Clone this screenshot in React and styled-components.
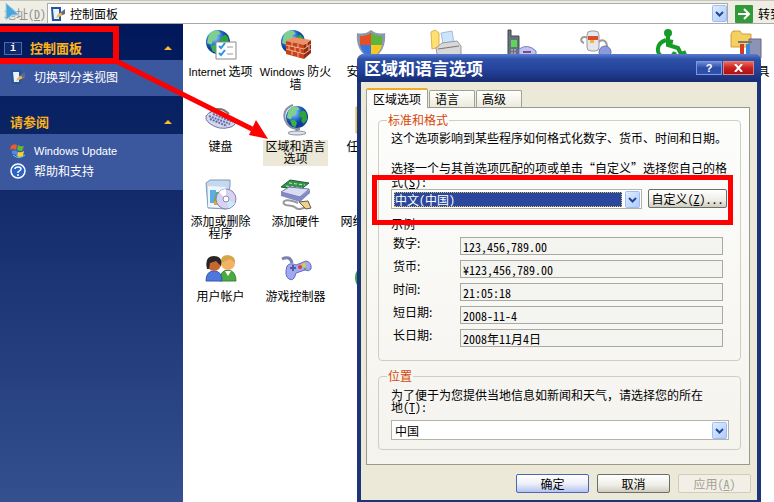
import { useId } from 'react';
import styled, { createGlobalStyle, css } from 'styled-components';

const GlobalStyle = createGlobalStyle`
  * {
    box-sizing: border-box;
  }
  body {
    margin: 0;
    background: #fff;
    color: #000;
    font: 12px/12px 'Noto Sans CJK SC', sans-serif;
    overflow: hidden;
  }
  svg {
    flex: none;
  }
  button, input, select {
    font: inherit;
    color: inherit;
    margin: 0;
  }
`;

/* ---------- icons ---------- */

const Globe = ({ r = 13, cx = 16, cy = 15 }) => {
  const id = useId();
  return (
    <>
      <radialGradient id={id} cx='35%' cy='30%'>
        <stop offset='0' stopColor='#a8d4ff' />
        <stop offset='0.6' stopColor='#2f78dc' />
        <stop offset='1' stopColor='#123c96' />
      </radialGradient>
      <circle cx={cx} cy={cy} r={r} fill={`url(#${id})`} />
      <g transform={`translate(${cx} ${cy}) scale(${r / 13})`} fill='#37b34a'>
        <path d='M-10-7C-8-12-3-13 1-12L3-9-1-7-2-3-6-1-7 3-12 1Z' fill='#7fd08a' />
        <path d='M3-5 8-8 11-5 12 3 8 8 5 5 6 1 2-1Z' fill='#2da33c' />
        <path d='M-8 4-3 3 0 7-2 12-6 10Z' />
      </g>
    </>
  );
};

const art = {
  internet: (
    <>
      <Globe r={12} cx={13} cy={13} />
      <path d='M11 13H31V30H11Z' fill='#fff' stroke='#8a8a8a' />
      <path d='M14 17 16 19 20 14M14 24 16 26 20 21' fill='none' stroke='#2496dc' strokeWidth='2' />
      <path d='M22 18H28M22 25H28' stroke='#999' />
    </>
  ),
  firewall: (
    <>
      <Globe r={12} cx={13} cy={13} />
      <path d='M6 12 24 16V30L6 25Z' fill='#c8431c' />
      <path d='M24 16 31 11V24L24 30Z' fill='#8f2d14' />
      <path d='M6 12 13 8 31 11 24 16Z' fill='#f09066' />
      <path
        d='M6 16 24 20 31 15M6 20 24 25 31 20M12 13V18M18 15V19M9 17V21M15 18V23M20 20V24M12 22V26M18 24V28M27 14V18M29 17V21'
        fill='none'
        stroke='#f3b48f'
      />
    </>
  ),
  shield: (
    <>
      <path d='M16 1Q22 6 30 4Q32 22 16 31Q0 22 2 4Q10 6 16 1Z' fill='#8b98ae' />
      <path d='M16 4Q10 8 5 7V16H16Z' fill='#e84e26' />
      <path d='M16 4Q22 8 27 7V16H16Z' fill='#5db53a' />
      <path d='M5 16Q7 25 16 29V16Z' fill='#3577df' />
      <path d='M27 16Q25 25 16 29V16Z' fill='#f8c820' />
    </>
  ),
  printer: (
    <>
      <path d='M1 3 5 1 9 4V18L2 20Z' fill='#ffe071' stroke='#e1b048' />
      <path d='M11 4 22 2 24 14 13 15Z' fill='#cbe6fc' stroke='#a3bed8' />
      <path d='M6 19 12 14 27 12 31 17V27L8 30Z' fill='#d8d8d8' stroke='#999' />
      <path d='M8 20 29 17' stroke='#777' />
    </>
  ),
  phone: (
    <>
      <path d='M3 1H6V7H14V30H3Z' fill='#67727e' stroke='#404850' />
      <path d='M6 11H12V18H6Z' fill='#5bd852' />
      <path d='M6 21H12M6 24H12' stroke='#ccd' strokeDasharray='2 1' />
      <path d='M14 20Q23 14 31 22V28H14Z' fill='#bdc4f2' stroke='#767fba' />
      <path d='M18 23H26' stroke='#884488' strokeWidth='2' />
    </>
  ),
  power: (
    <>
      <path d='M8 9C1 6-1 12 4 14M17 15C22 8 27 12 27 18' fill='none' stroke='#999' strokeWidth='2' />
      <rect x='7' y='2' width='12' height='20' rx='4' fill='#e4e6f0' stroke='#999' />
      <path d='M8 7H18V11H8Z' fill='#dc4c27' />
      <path d='M10 11H14V14H10Z' fill='#f2b53a' />
      <circle cx='25' cy='23' r='6' fill='#8d99dc' stroke='#6572b4' />
    </>
  ),
  access: (
    <g fill='none' stroke='#169b27' strokeWidth='4'>
      <circle cx='13' cy='4' r='2' fill='#169b27' />
      <path d='M13 7V16L23 19 26 25 31 23M18 13 13 12M11 11C1 14 0 26 9 28 15 30 19 26 20 23' />
    </g>
  ),
  tools: (
    <>
      <path d='M1 5 3 2H10L12 5H21V18H1Z' fill='#f4cf61' stroke='#d29e35' />
      <path d='M19 10H31V29H19Z' fill='#8c93b4' stroke='#636a8b' />
      <path d='M12 15V28' stroke='#d23c26' strokeWidth='4' />
      <path d='M18 15V28' stroke='#3887dc' strokeWidth='4' />
      <path d='M8 13H22' stroke='#777' strokeWidth='2' />
    </>
  ),
  keyboard: (
    <>
      <path d='M4 10Q14 0 24 10' fill='none' stroke='#777' strokeWidth='2' />
      <path d='M1 12Q6 5 14 9L29 15Q33 20 26 23 14 27 4 19Q0 16 1 12Z' fill='#d3d7ee' stroke='#70779f' />
      <path d='M4 12 25 20M5 15 22 22M8 10 28 18' stroke='#636caa' strokeWidth='2' strokeDasharray='2 1' />
    </>
  ),
  region: (
    <>
      <path d='M13 1Q2 5 5 16 9 26 20 25' fill='none' stroke='#8a90a0' strokeWidth='2' />
      <Globe r={11} cx={17} cy={13} />
      <path d='M17 25V28' stroke='#8a90a0' strokeWidth='3' />
      <ellipse cx='17' cy='29' rx='9' ry='2' fill='#dde1ef' stroke='#8a90a0' />
    </>
  ),
  folder: <path d='M1 3H12L15 6H30V29H1Z' fill='#ffe070' stroke='#daac3c' />,
  programs: (
    <>
      <path d='M1 4 5 1H25V7L21 30 3 29Z' fill='#c5d8ed' stroke='#7d9ab8' />
      <path d='M3 7 21 8V29L3 28Z' fill='#edf6ff' />
      <path d='M5 11H11V24H5Z' fill='#5daaf0' />
      <path d='M11 13H15V24H8Z' fill='#5fb84b' />
      <path d='M9 22H15V26H9Z' fill='#f1a131' />
      <circle cx='21' cy='20' r='10' fill='#d7d2f4' stroke='#8884af' />
      <path d='M21 20 14 13A10 10 0 0 1 21 10Z' fill='#fff' />
      <path d='M21 20 30 24A10 10 0 0 1 24 29Z' fill='#c5eef9' />
      <circle cx='21' cy='20' r='3' fill='#fff' stroke='#8c89ad' />
    </>
  ),
  hardware: (
    <>
      <path d='M1 8 10 1 29 4 20 11Z' fill='#35904b' stroke='#205d33' />
      <path d='M6 7 22 9M9 4 25 6' stroke='#c9e9c0' strokeDasharray='3 2' />
      <path d='M1 13 9 8 29 10 20 18Z' fill='#dadcf4' stroke='#7179aa' />
      <path d='M1 13V17L20 23 30 14V10L20 18Z' fill='#8289c4' />
      <path d='M18 24C6 19 2 22 4 25 7 28 12 25 16 29 19 32 23 28 26 29' fill='none' stroke='#999' strokeWidth='2' />
      <path d='M19 23 28 22 31 29 26 30Z' fill='#f0d18a' stroke='#605c58' />
    </>
  ),
  network: <path d='M8 3H27V18H8ZM17 18V24M10 28H30' fill='#72aceb' stroke='#577fae' strokeWidth='2' />,
  users: (
    <>
      <path d='M15 27Q15 16 23 16 31 17 31 27Z' fill='#4bab42' stroke='#338a30' />
      <circle cx='23' cy='9' r='7' fill='#f3b267' />
      <path d='M16 9Q15 1 23 1 31 2 30 9L25 5Z' fill='#d6a64b' />
      <path d='M20 17 23 22 26 17Z' fill='#fff' />
      <path d='M1 27Q1 17 9 17 17 17 17 27Z' fill='#4f78df' stroke='#3457b0' />
      <circle cx='9' cy='10' r='7' fill='#c66732' />
      <path d='M2 15Q-1 2 9 2 18 2 16 12L11 7 5 9 4 15Z' fill='#292426' />
    </>
  ),
  game: (
    <>
      <path d='M2 5Q10 1 12 9' fill='none' stroke='#7d82ad' strokeWidth='3' />
      <path d='M7 12Q10 8 16 11L26 7Q32 8 31 15 29 18 25 16L16 19Q14 28 9 25 4 22 7 12Z' fill='#a0a8ef' stroke='#656db8' />
      <path d='M10 14H16M13 11V17' stroke='#525b9f' strokeWidth='2' />
      <circle cx='20' cy='13' r='2' fill='#e23e2e' />
      <circle cx='24' cy='11' r='2' fill='#edc82b' />
      <circle cx='25' cy='15' r='1' fill='#38a543' />
    </>
  ),
  speech: <circle cx='14' cy='24' r='14' fill='#35a34b' />,
};

const PanelIcon = () => (
  <svg width='16' height='16' viewBox='0 0 16 16'>
    <path d='M1 1 11 1V15L2 15Z' fill='#24559c' />
    <path d='M3 3 9 3V13L4 13Z' fill='#e9f4ff' />
    <path d='M6 12 8 8 14 5 15 8 9 11Z' fill='#f0b85c' />
    <path d='M11 6 15 3V8L12 9Z' fill='#5e6b85' />
  </svg>
);

const UpdateIcon = () => (
  <svg width='16' height='16' viewBox='0 0 16 16'>
    <path d='M1 3Q4 0 7 2L6 7Q3 5 0 7Z' fill='#ec5b29' />
    <path d='M8 2Q11 4 14 3L12 8Q9 8 7 7Z' fill='#58ba3b' />
    <path d='M2 8Q5 6 8 9L7 13Q4 10 2 11Z' fill='#4b8bee' />
    <path d='M8 9Q11 10 14 8L13 13Q10 15 7 13Z' fill='#f6d12b' />
    <path d='M3 12Q9 17 15 12' fill='none' stroke='#69c9ef' />
  </svg>
);

const HelpIcon = () => (
  <svg width='16' height='16' viewBox='0 0 16 16'>
    <circle cx='8' cy='8' r='7' fill='#2c63c7' stroke='#fff' strokeWidth='1.5' />
    <path d='M5 6Q5 4 8 4 11 4 11 6 11 7 8 9V10M8 11V13' fill='none' stroke='#fff' strokeWidth='1.5' />
  </svg>
);

const Chevron = () => {
  const id = useId();
  return (
    <svg width='15' height='17' viewBox='0 0 15 17'>
      <linearGradient id={id} x2='1' y2='1'>
        <stop offset='0' stopColor='#e1ecff' />
        <stop offset='1' stopColor='#aecbfb' />
      </linearGradient>
      <rect x='0.5' y='0.5' width='14' height='16' rx='1' fill={`url(#${id})`} stroke='#9ebcf5' />
      <path d='M4 7 7.5 10.5 11 7' fill='none' stroke='#1f4996' strokeWidth='2' />
    </svg>
  );
};

/* ---------- address bar ---------- */

const AddressBar = styled.header`
  display: flex;
  align-items: center;
  height: 24px;
  padding: 3px 0 0;
  background: #efeee4;
  border-top: 1px solid #c9c7ba;
  border-bottom: 1px solid #aaa;
  overflow: hidden;
`;

const AddressLabel = styled.label`
  width: 47px;
  padding-left: 4px;
  color: #8f8f8c;
  font-feature-settings: 'hwid';
  white-space: nowrap;
`;

const AddressBox = styled.div`
  display: flex;
  flex: 1;
  align-items: center;
  gap: 4px;
  height: 21px;
  padding: 0 0 0 2px;
  background: #fff;
  border: 1px solid #aaa;
`;

const AddressInput = styled.input`
  flex: 1;
  min-width: 0;
  height: 16px;
  padding: 0;
  border: 0;
  outline: 0;
`;

const GoButton = styled.button`
  display: flex;
  flex: none;
  align-items: center;
  gap: 5px;
  width: 46px;
  padding: 0 0 0 7px;
  border: 0;
  background: none;
  white-space: nowrap;
`;

const Pointer = styled.svg`
  position: absolute;
  left: 5px;
  top: 3px;
`;

/* ---------- side bar ---------- */

const Shell = styled.div`
  position: relative;
  display: flex;
  flex-direction: column;
  height: 100vh;
  overflow: hidden;
`;

const Main = styled.div`
  display: flex;
  flex: 1;
`;

const Sidebar = styled.aside`
  flex: none;
  width: 183px;
  background: linear-gradient(#00185a, #0a2363 100px, #122a6a 166px, #34508f);
`;

const PanelHead = styled.h2`
  display: flex;
  align-items: center;
  gap: 8px;
  height: 36px;
  margin: 0;
  padding: 12px 11px 0 ${(p) => (p.$badge ? '4px' : '10px')};
  color: #ffb31a;
  font-size: 13px;
  line-height: 14px;
`;

const Badge = styled.span`
  width: 18px;
  height: 13px;
  border: 1px solid #4e69aa;
  background: #10296c;
  color: #fff;
  font: bold 10px/11px 'Liberation Mono', monospace;
  text-align: center;
`;

const Triangle = styled.i`
  margin-left: auto;
  border: 4px solid transparent;
  border-top: 0;
  border-bottom-color: #ffb92f;
`;

const PanelBody = styled.nav`
  display: flex;
  flex-direction: column;
  gap: 4px;
  padding: 9px 10px 11px;
  margin-bottom: 2px;
  background: #3b589f;
`;

const PanelLink = styled.a`
  display: flex;
  align-items: center;
  gap: 8px;
  height: 16px;
  color: #fff;
  text-decoration: none;
`;

/* ---------- icon area ---------- */

const Latin = styled.span`
  font-family: 'Liberation Sans', sans-serif;
  font-size: 11px;
`;

const IconArea = styled.main`
  flex: 1;
  min-width: 0;
  padding-top: 5px;
  overflow: hidden;
`;

const IconRow = styled.div`
  display: flex;
  height: 75px;
`;

const Item = styled.a`
  display: flex;
  flex: none;
  flex-direction: column;
  align-items: center;
  gap: 4px;
  width: 75px;
  color: #000;
  text-align: center;
  text-decoration: none;
`;

const ItemLabel = styled.span`
  padding: 0 2px 2px;
  white-space: nowrap;
  ${(p) =>
    p.$active &&
    css`
      background: #ebe8d8;
    `}
`;

/* ---------- dialog ---------- */

const Dialog = styled.section`
  position: absolute;
  left: 357px;
  top: 54px;
  width: 404px;
  background: #ece9d8;
  border: solid #1c3579;
  border-width: 0 4px 3px;
  border-radius: 7px 7px 0 0;
`;

const TitleBar = styled.header`
  display: flex;
  align-items: center;
  gap: 1px;
  height: 28px;
  margin: 0 -4px;
  padding: 0 7px;
  border-radius: 7px 7px 0 0;
  background: linear-gradient(#5b7cd4, #2f51a8 5px, #24429a 16px, #162c72);
`;

const Title = styled.h1`
  flex: 1;
  margin: 0;
  color: #fff;
  font-size: 17px;
  line-height: 20px;
`;

const TitleButton = styled.button`
  display: grid;
  place-items: center;
  width: ${(p) => (p.$close ? '31px' : '26px')};
  height: 14px;
  padding: 0;
  border: 1px solid ${(p) => (p.$close ? '#e38377' : '#7d98dc')};
  background: ${(p) =>
    p.$close
      ? 'linear-gradient(#e96a5c, #cc1f1f 50%, #a81414)'
      : 'linear-gradient(#6f8bd6, #2b4ca6 50%, #2f51ad)'};
  color: #fff;
  font: bold 11px/12px 'Liberation Sans', sans-serif;
`;

const TabList = styled.div`
  display: flex;
  align-items: flex-end;
  gap: 1px;
  height: 25px;
  padding: 0 5px;
`;

const Tab = styled.button`
  height: 17px;
  padding: 0 15px 0 5px;
  border: 1px solid #a0a294;
  border-bottom: 0;
  border-radius: 2px 2px 0 0;
  background: linear-gradient(#fff, #eceade);
  ${(p) =>
    p.$active &&
    css`
      z-index: 1;
      height: 20px;
      margin-bottom: -1px;
      padding: 0 6px;
      border-top: 2px solid #f0a92c;
      background: #fcfcfb;
    `}
`;

const TabPage = styled.div`
  display: flex;
  flex-direction: column;
  gap: 9px;
  margin: 0 7px 0 5px;
  padding: 6px 8px 14px 11px;
  border: 1px solid #989a8c;
  background: linear-gradient(#fdfdfc, #f4f3ee);
`;

const Group = styled.fieldset`
  min-width: 0;
  margin: 0;
  padding: ${(p) => (p.$tall ? '6px 13px 13px 12px' : '7px 11px 9px 12px')};
  border: 1px solid #cfcfc0;
  border-radius: 4px;
`;

const Legend = styled.legend`
  margin-left: -4px;
  padding: 0 1px;
  color: #d54708;
`;

const Note = styled.p`
  margin: 0 -2px 17px 0;
`;

const FieldLabel = styled.label`
  display: block;
  line-height: ${(p) => p.$line || 12}px;
`;

const Key = styled.span`
  font-feature-settings: 'hwid';
  white-space: nowrap;
`;

const ComboRow = styled.div`
  display: flex;
  gap: 6px;
  margin-top: ${(p) => p.$gap}px;
`;

const ComboBox = styled.div`
  display: flex;
  flex: 1;
  align-items: center;
  height: 20px;
  padding: 1px;
  border: 1px solid #b4b4a9;
  background: #fff;
`;

const Select = styled.select`
  flex: 1;
  height: 15px;
  padding: 0 2px;
  border: 0;
  outline: 0;
  appearance: none;
  background: #fff;
  font-feature-settings: 'hwid';
  line-height: 13px;
  ${(p) =>
    p.$focused &&
    css`
      margin: 0 3px 0 1px;
      padding: 0;
      background: #2b479d;
      border: 1px dotted #d4c35c;
      color: #fff;
    `}
`;

const SampleTitle = styled.p`
  margin: 9px 0 0;
`;

const Samples = styled.div`
  display: grid;
  grid-template-columns: 67px 1fr;
  row-gap: 5px;
  margin: 7px 4px 0 2px;
`;

const Sample = styled.input`
  width: 100%;
  min-width: 0;
  height: 18px;
  padding: 0 2px;
  border: 1px solid #a9a9a2;
  background: #f4f4f1;
  font-feature-settings: 'hwid';
`;

const Button = styled.button`
  width: ${(p) => (p.$wide ? '79px' : '73px')};
  height: 19px;
  padding: 0;
  border: 1px solid #6e6e68;
  border-radius: 2px;
  background: linear-gradient(#fff, #eeede6 60%, #cfccc0);
  font-feature-settings: 'hwid';
  white-space: nowrap;
  ${(p) =>
    p.$primary &&
    css`
      border-color: #4d67b5;
      background: linear-gradient(#fff, #eef0fa 50%, #b4c4f0);
    `}
  &:disabled {
    border-color: #d0cdbd;
    background: #f2f0e6;
    color: #a3a195;
  }
`;

const Footer = styled.footer`
  display: flex;
  justify-content: flex-end;
  gap: 8px;
  padding: 9px 6px 7px;
`;

/* ---------- red marks ---------- */

const Frame = styled.div`
  position: absolute;
  border: ${(p) => p.$weight}px solid #fe0000;
  left: ${(p) => p.$x}px;
  top: ${(p) => p.$y}px;
  width: ${(p) => p.$w}px;
  height: ${(p) => p.$h}px;
  pointer-events: none;
`;

const Arrow = styled.svg`
  position: absolute;
  left: 110px;
  top: 56px;
  pointer-events: none;
`;

const rows = [
  [
    ['internet', <><Latin>Internet</Latin> 选项</>],
    ['firewall', <><Latin>Windows</Latin> 防火<br />墙</>],
    ['shield', '安全中心'],
    ['printer'],
    ['phone'],
    ['power'],
    ['access'],
    ['tools', '管理工具'],
  ],
  [
    ['keyboard', '键盘'],
    ['region', <>区域和语言<br />选项</>],
    ['folder', '任务计划'],
  ],
  [
    ['programs', <>添加或删除<br />程序</>],
    ['hardware', '添加硬件'],
    ['network', '网络安装向'],
  ],
  [
    ['users', '用户帐户'],
    ['game', '游戏控制器'],
    ['speech'],
  ],
];

const samples = [
  ['number', '数字:', '123,456,789.00'],
  ['money', '货币:', '￥123,456,789.00'],
  ['time', '时间:', '21:05:18'],
  ['shortDate', '短日期:', '2008-11-4'],
  ['longDate', '长日期:', '2008年11月4日'],
];

function SampleRow({ id, label, value }) {
  return (
    <>
      <FieldLabel htmlFor={id}>{label}</FieldLabel>
      <Sample id={id} value={value} readOnly />
    </>
  );
}

function SettingsDialog() {
  return (
    <Dialog role='dialog' aria-labelledby='dialog-title'>
      <TitleBar>
        <Title id='dialog-title'>区域和语言选项</Title>
        <TitleButton>?</TitleButton>
        <TitleButton $close aria-label='关闭'>
          <svg width='9' height='8' viewBox='0 0 9 8'>
            <path d='M1 0 8 8M8 0 1 8' stroke='#fff' strokeWidth='2' />
          </svg>
        </TitleButton>
      </TitleBar>
      <TabList role='tablist'>
        <Tab role='tab' aria-selected='true' $active>区域选项</Tab>
        <Tab role='tab'>语言</Tab>
        <Tab role='tab'>高级</Tab>
      </TabList>
      <TabPage>
        <Group $tall>
          <Legend>标准和格式</Legend>
          <Note>这个选项影响到某些程序如何格式化数字、货币、时间和日期。</Note>
          <FieldLabel htmlFor='format' $line={14}>
            选择一个与其首选项匹配的项或单击“自定义”选择您自己的格
            <br />
            <Key>式(<u>S</u>):</Key>
          </FieldLabel>
          <ComboRow $gap={0}>
            <ComboBox>
              <Select id='format' $focused>
                <option>中文(中国)</option>
              </Select>
              <Chevron />
            </ComboBox>
            <Button $wide>自定义(<u>Z</u>)...</Button>
          </ComboRow>
          <SampleTitle>示例</SampleTitle>
          <Samples>
            {samples.map(([id, label, value]) => (
              <SampleRow key={id} id={id} label={label} value={value} />
            ))}
          </Samples>
        </Group>
        <Group>
          <Legend>位置</Legend>
          <FieldLabel htmlFor='place'>
            为了便于为您提供当地信息如新闻和天气，请选择您的所在
            <br />
            <Key>地(<u>T</u>):</Key>
          </FieldLabel>
          <ComboRow $gap={7}>
            <ComboBox>
              <Select id='place'>
                <option>中国</option>
              </Select>
              <Chevron />
            </ComboBox>
          </ComboRow>
        </Group>
      </TabPage>
      <Footer>
        <Button $primary>确定</Button>
        <Button>取消</Button>
        <Button disabled>应用(<u>A</u>)</Button>
      </Footer>
    </Dialog>
  );
}

export default function App() {
  return (
    <Shell>
      <GlobalStyle />
      <AddressBar>
        <AddressLabel htmlFor='address'>地址(<u>D</u>)</AddressLabel>
        <AddressBox>
          <PanelIcon />
          <AddressInput id='address' defaultValue='控制面板' />
          <Chevron />
        </AddressBox>
        <GoButton>
          <svg width='18' height='18' viewBox='0 0 18 18'>
            <rect width='18' height='18' rx='1' fill='#329a38' />
            <path d='M3 9H14M9 4 14 9 9 14' fill='none' stroke='#fff' strokeWidth='2' />
          </svg>
          转到
        </GoButton>
      </AddressBar>
      <Pointer width='16' height='20' viewBox='0 0 16 20'>
        <path d='M1 0 14 12 7 12 1 17Z' fill='#4aa5dc' stroke='#a5d4ec' />
      </Pointer>

      <Main>
        <Sidebar>
          <PanelHead $badge>
            <Badge>i</Badge>控制面板<Triangle />
          </PanelHead>
          <PanelBody>
            <PanelLink href='#category'><PanelIcon />切换到分类视图</PanelLink>
          </PanelBody>
          <PanelHead>
            请参阅<Triangle />
          </PanelHead>
          <PanelBody>
            <PanelLink href='#update'><UpdateIcon /><Latin>Windows Update</Latin></PanelLink>
            <PanelLink href='#help'><HelpIcon />帮助和支持</PanelLink>
          </PanelBody>
        </Sidebar>
        <IconArea>
          {rows.map((row) => (
            <IconRow key={row[0][0]}>
              {row.map(([icon, label]) => (
                <Item key={icon} href={`#${icon}`}>
                  <svg width='32' height='32' viewBox='0 0 32 32'>{art[icon]}</svg>
                  {label && <ItemLabel $active={icon === 'region'}>{label}</ItemLabel>}
                </Item>
              ))}
            </IconRow>
          ))}
        </IconArea>
      </Main>

      <SettingsDialog />

      <Frame $x={-6} $y={26} $w={125} $h={38} $weight={6} />
      <Frame $x={372} $y={175} $w={361} $h={50} $weight={5} />
      <Arrow width='160' height='84' viewBox='0 0 160 84'>
        <path d='M6 5 142 73' stroke='#fe0000' strokeWidth='5' />
        <path d='M158 83 139 79 146 64Z' fill='#fe0000' />
      </Arrow>
    </Shell>
  );
}
